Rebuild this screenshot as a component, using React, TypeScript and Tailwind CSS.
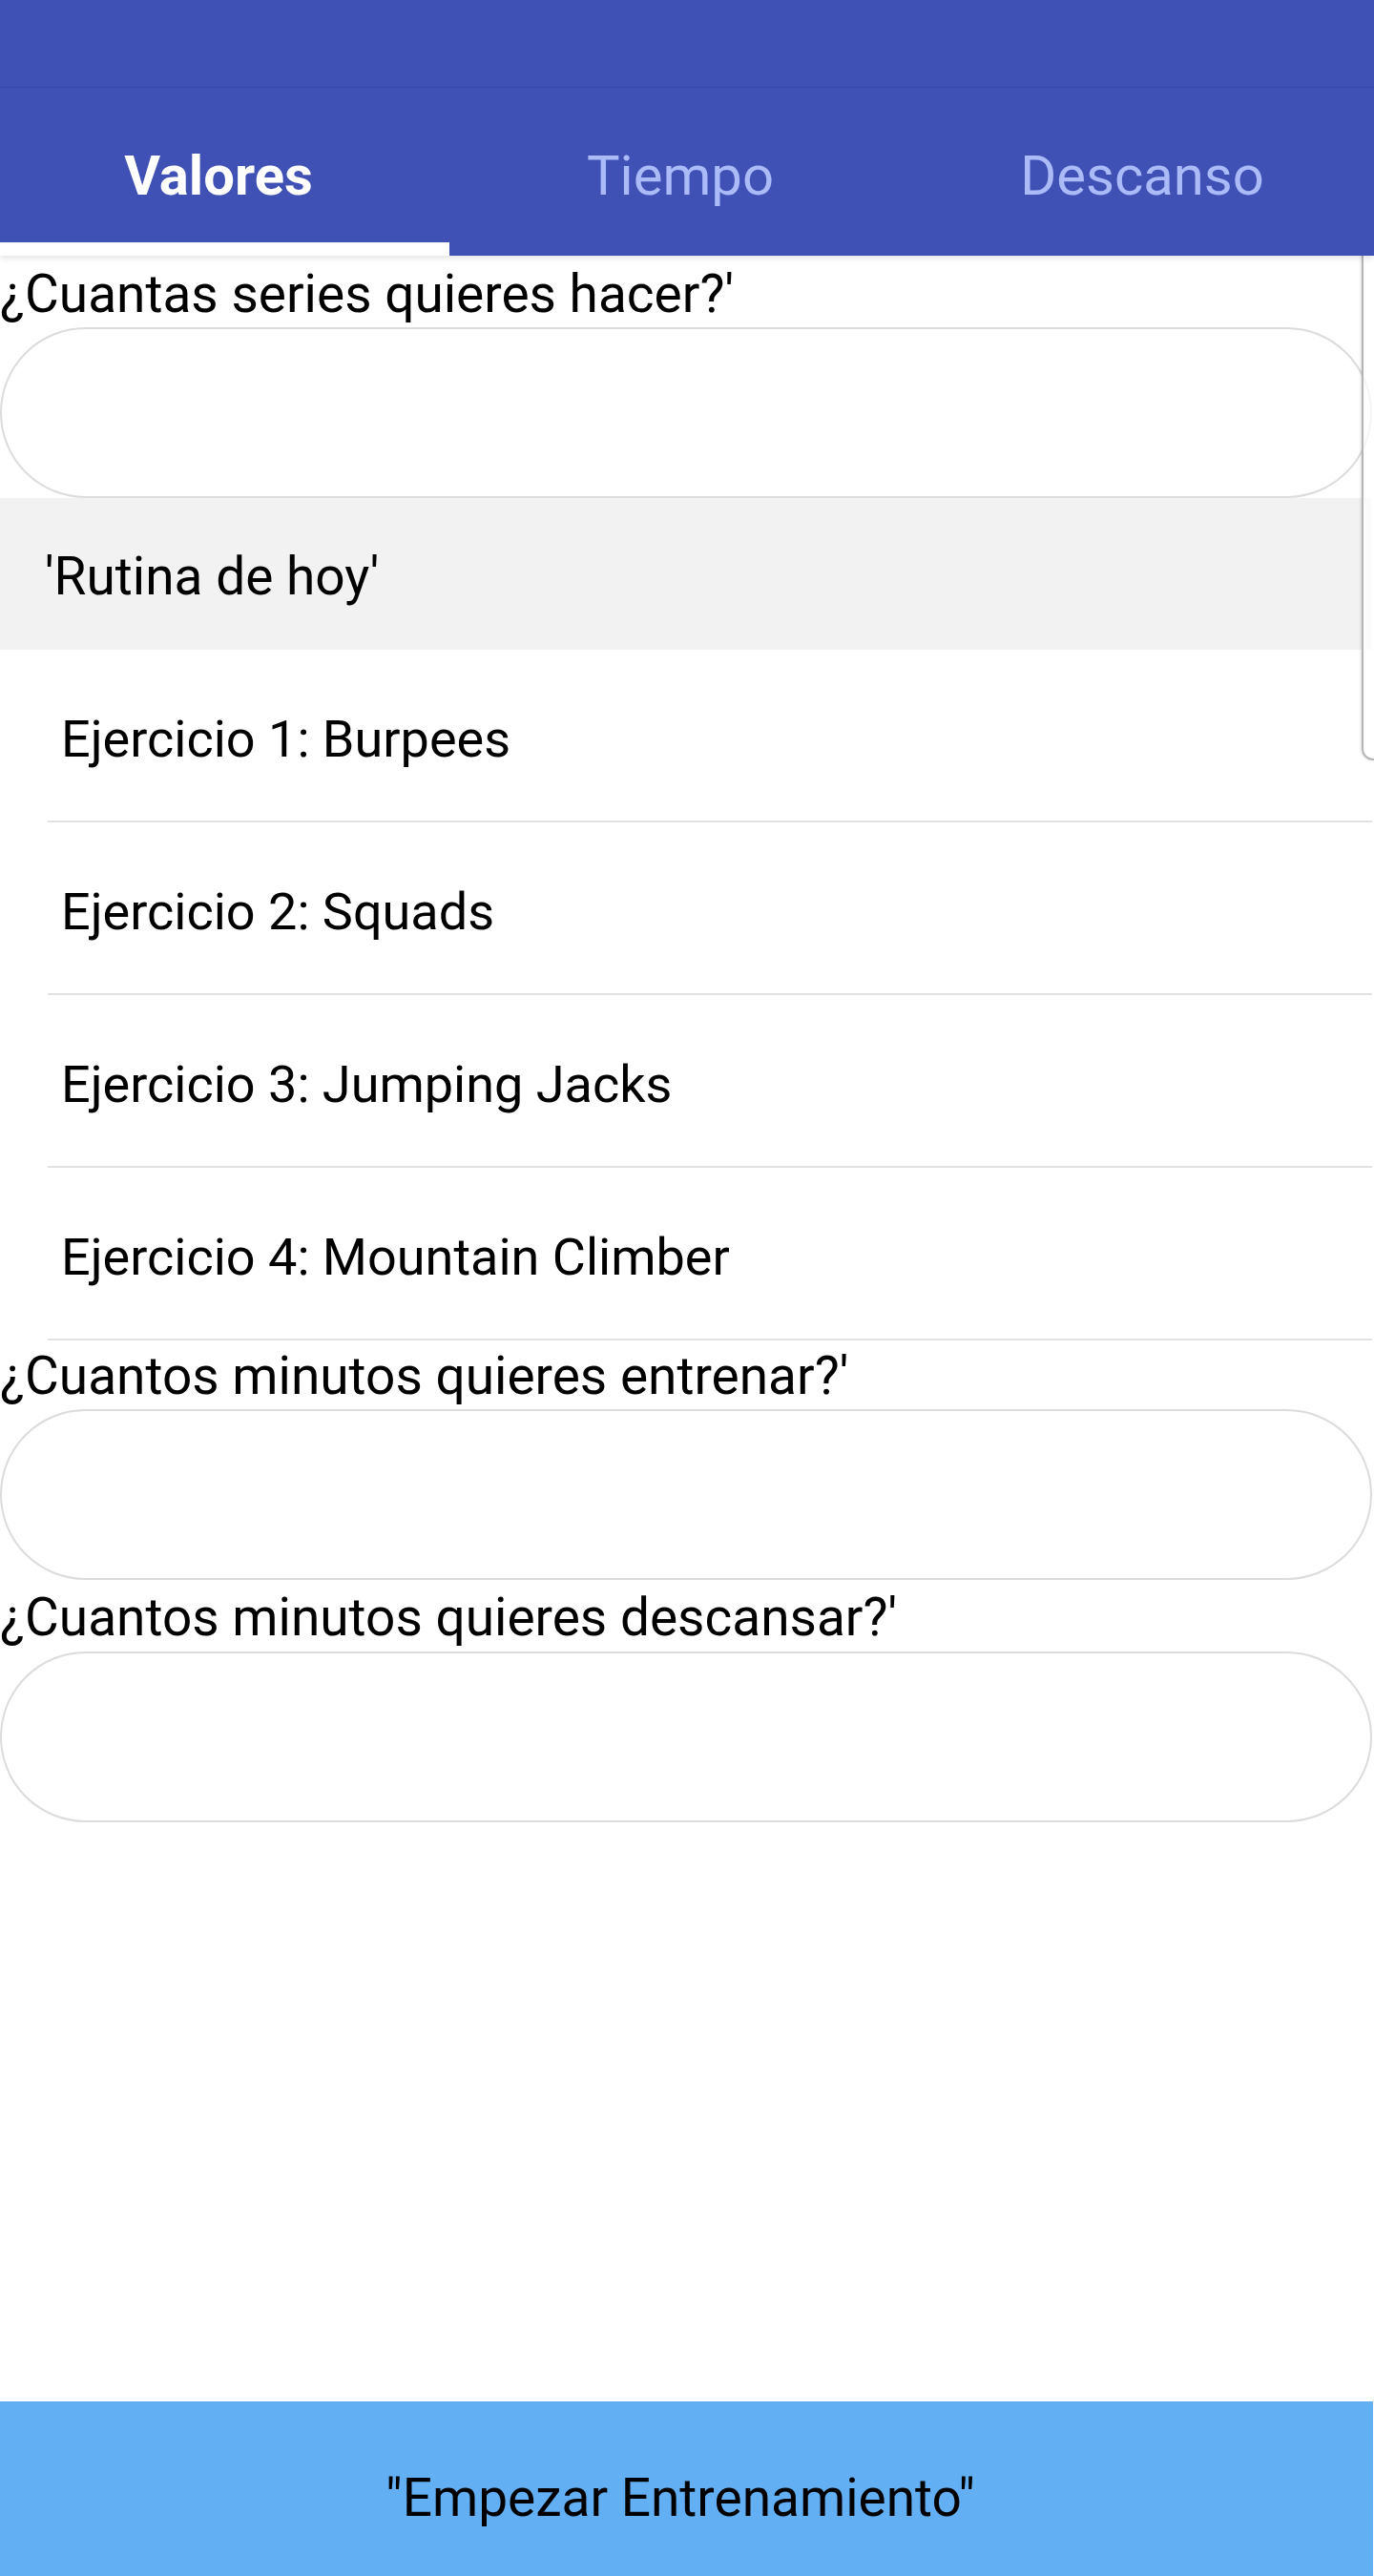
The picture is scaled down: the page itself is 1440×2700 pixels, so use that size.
import React from "react";

const ejercicios = [
  "Ejercicio 1: Burpees",
  "Ejercicio 2: Squads",
  "Ejercicio 3: Jumping Jacks",
  "Ejercicio 4: Mountain Climber",
];

function Field() {
  return (
    <div className="ml-[13px] h-[179px] w-[1438px] rounded-[90px] border-2 border-[#DCDCDC] bg-white" />
  );
}

export default function App() {
  return (
    <div className="relative w-[1440px] h-[2700px] overflow-hidden bg-white font-['Roboto','Noto_Sans',sans-serif] text-black">
      <div className="flex h-[2719px] flex-col">
        {/* status bar */}
        <div className="h-[92px] shrink-0 border-b border-[#3A4AAA] bg-[#3F51B5]" />

        {/* tabs */}
        <div className="relative z-10 h-[176px] shrink-0 bg-[#3F51B5] shadow-[0_3px_6px_rgba(0,0,0,0.10)]">
          <div className="ml-[-13px] flex h-full w-[1452px]">
            <div className="flex w-[484px] flex-col">
              <div className="flex h-[162px] items-center justify-center pt-[22px] text-[58px] font-bold text-white">
                Valores
              </div>
              <div className="h-[14px] bg-white" />
            </div>
            <div className="flex w-[484px] flex-col">
              <div className="flex h-[162px] items-center justify-center pt-[22px] text-[58px] text-[#AABBF8]">
                Tiempo
              </div>
            </div>
            <div className="flex w-[484px] flex-col">
              <div className="flex h-[162px] items-center justify-center pt-[22px] text-[58px] text-[#AABBF8]">
                Descanso
              </div>
            </div>
          </div>
        </div>

        {/* content */}
        <div className="ml-[-13px] w-[1451px]">
          <div className="h-[75px] whitespace-nowrap pl-[13px] text-[55px] leading-[80px]">
            ¿Cuantas series quieres hacer?'
          </div>
          <Field />

          <div className="flex h-[159px] items-center bg-[#F2F2F2] pl-[60px] pt-[6px] text-[55px]">
            'Rutina de hoy'
          </div>

          <div>
            {ejercicios.map((e) => (
              <div
                key={e}
                className="ml-[63px] flex h-[181px] items-center border-b-2 border-[#E2E2E2] pl-[14px] pt-[8px] text-[54px]"
              >
                {e}
              </div>
            ))}
          </div>

          <div className="h-[72px] whitespace-nowrap pl-[13px] text-[55px] leading-[75px]">
            ¿Cuantos minutos quieres entrenar?'
          </div>
          <Field />

          <div className="h-[75px] whitespace-nowrap pl-[13px] text-[55px] leading-[78px]">
            ¿Cuantos minutos quieres descansar?'
          </div>
          <Field />
        </div>

        {/* start button */}
        <div className="mt-auto ml-[-13px] flex h-[202px] w-[1452px] shrink-0 items-center justify-center bg-[#63AFF4] text-[55px] text-black">
          "Empezar Entrenamiento"
        </div>
      </div>

      {/* scroll handle overlay */}
      <div className="absolute left-[1427px] top-[225px] h-[572px] w-[24px] rounded-[14px] border-2 border-[#B5B5B5] bg-white/70 shadow-[-1px_0_3px_rgba(0,0,0,0.12)]" />
    </div>
  );
}
